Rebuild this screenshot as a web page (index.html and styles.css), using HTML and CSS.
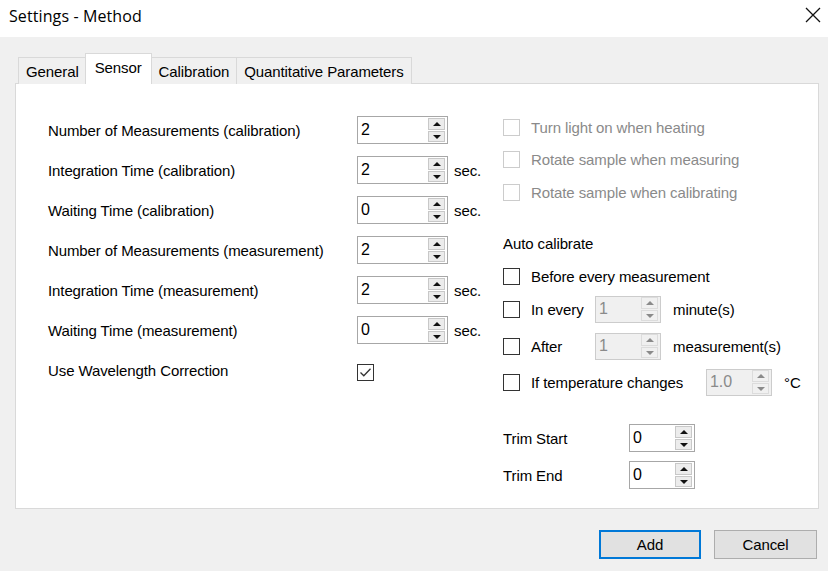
FILE: index.html
```html
<!DOCTYPE html>
<html>
<head>
	<meta charset="utf-8">
	<title>Settings - Method</title>
	<link rel="stylesheet" href="styles.css">
</head>
<body>
	<div class="titlebar">
		<span class="title">Settings - Method</span>
		<svg class="close" width="16" height="16" viewBox="0 0 16 16"><path d="M1 1L15 15M15 1L1 15" stroke="#111" stroke-width="1.3" fill="none"/></svg>
	</div>
	<div class="client">
		<div class="tabs">
			<div class="tab">General</div>
			<div class="tab active">Sensor</div>
			<div class="tab">Calibration</div>
			<div class="tab">Quantitative Parameters</div>
		</div>
		<div class="panel">
			<div class="left">
				<div class="row"><span class="label">Number of Measurements (calibration)</span>
					<div class="spin"><span class="val">2</span><span class="arrows"><i class="up"></i><i class="down"></i></span></div></div>
				<div class="row"><span class="label">Integration Time (calibration)</span>
					<div class="spin"><span class="val">2</span><span class="arrows"><i class="up"></i><i class="down"></i></span></div><span class="unit">sec.</span></div>
				<div class="row"><span class="label">Waiting Time (calibration)</span>
					<div class="spin"><span class="val">0</span><span class="arrows"><i class="up"></i><i class="down"></i></span></div><span class="unit">sec.</span></div>
				<div class="row"><span class="label">Number of Measurements (measurement)</span>
					<div class="spin"><span class="val">2</span><span class="arrows"><i class="up"></i><i class="down"></i></span></div></div>
				<div class="row"><span class="label">Integration Time (measurement)</span>
					<div class="spin"><span class="val">2</span><span class="arrows"><i class="up"></i><i class="down"></i></span></div><span class="unit">sec.</span></div>
				<div class="row"><span class="label">Waiting Time (measurement)</span>
					<div class="spin"><span class="val">0</span><span class="arrows"><i class="up"></i><i class="down"></i></span></div><span class="unit">sec.</span></div>
				<div class="row"><span class="label">Use Wavelength Correction</span>
					<span class="check checked"><svg width="15" height="15" viewBox="0 0 15 15"><path d="M2.5 7.5L5.8 10.8L12.5 3.8" stroke="#333" stroke-width="1.3" fill="none"/></svg></span></div>
			</div>
			<div class="right">
				<div class="opt r1 disabled"><span class="check"></span>Turn light on when heating</div>
				<div class="opt r2 disabled"><span class="check"></span>Rotate sample when measuring</div>
				<div class="opt r3 disabled"><span class="check"></span>Rotate sample when calibrating</div>
				<div class="heading">Auto calibrate</div>
				<div class="opt r5"><span class="check"></span>Before every measurement</div>
				<div class="opt r6"><span class="check"></span><span class="optlabel">In every</span>
					<div class="spin small off"><span class="val">1</span><span class="arrows"><i class="up"></i><i class="down"></i></span></div><span class="unit2">minute(s)</span></div>
				<div class="opt r7"><span class="check"></span><span class="optlabel">After</span>
					<div class="spin small off"><span class="val">1</span><span class="arrows"><i class="up"></i><i class="down"></i></span></div><span class="unit2">measurement(s)</span></div>
				<div class="opt r8"><span class="check"></span><span class="optlabel wide">If temperature changes</span>
					<div class="spin small off"><span class="val">1.0</span><span class="arrows"><i class="up"></i><i class="down"></i></span></div><span class="unit2">°C</span></div>
				<div class="trim first"><span class="trimlabel">Trim Start</span>
					<div class="spin small"><span class="val">0</span><span class="arrows"><i class="up"></i><i class="down"></i></span></div></div>
				<div class="trim"><span class="trimlabel">Trim End</span>
					<div class="spin small"><span class="val">0</span><span class="arrows"><i class="up"></i><i class="down"></i></span></div></div>
			</div>
		</div>
		<div class="buttons">
			<button class="btn default">Add</button>
			<button class="btn">Cancel</button>
		</div>
	</div>
</body>
</html>
```

FILE: styles.css
```css
body
{
	margin: 0;
	width: 828px;
	height: 571px;
	background-color: #f0f0f0;
	font-family: "Liberation Sans", Arial, sans-serif;
	font-size: 15px;
	letter-spacing: -0.1px;
	color: #000;
	overflow: hidden;
}
.titlebar
{
	height: 37px;
	background-color: #fff;
	display: flex;
	align-items: center;
	justify-content: space-between;
	padding: 0 7px 0 9px;
}
.title
{
	font-family: "Open Sans", sans-serif;
	font-size: 16px;
	letter-spacing: 0.1px;
	margin-top: -6px;
}
.close
{
	margin-top: -7px;
}
.client
{
	padding-top: 17px;
}
.tabs
{
	display: flex;
	align-items: flex-end;
	margin-left: 18px;
	height: 30px;
	position: relative;
	z-index: 1;
}
.tab
{
	height: 26px;
	line-height: 27px;
	padding: 0 7px;
	border: 1px solid #d9d9d9;
	border-bottom: none;
	margin-right: -1px;
	background-color: #f0f0f0;
}
.tab.active
{
	height: 30px;
	line-height: 28px;
	background-color: #fff;
	padding: 0 9px 0 9px;
	margin: 0 -1px 0 -1px;
	position: relative;
	z-index: 2;
}
.panel
{
	margin-left: 15px;
	margin-top: -1px;
	width: 802px;
	height: 424px;
	border: 1px solid #d9d9d9;
	background-color: #fff;
	display: flex;
}
.left
{
	width: 455px;
	padding: 32px 0 0 32px;
	display: flex;
	flex-direction: column;
	gap: 12px;
}
.row
{
	display: flex;
	align-items: center;
	height: 28px;
}
.label
{
	width: 309px;
}
.unit
{
	margin-left: 6px;
}
.spin
{
	width: 89px;
	height: 26px;
	border: 1px solid #a7a7a7;
	background-color: #fff;
	display: flex;
	justify-content: space-between;
	align-items: center;
}
.spin .val
{
	padding-left: 3px;
	font-size: 16px;
}
.arrows
{
	width: 17px;
	height: 24px;
	margin-right: 2px;
	display: flex;
	flex-direction: column;
	gap: 1px;
}
.arrows i
{
	flex: 1;
	background-color: #ececec;
	border: 1px solid #c8c8c8;
	position: relative;
}
.arrows i::after
{
	content: "";
	position: absolute;
	left: 4px;
	top: 3px;
	border-left: 4px solid transparent;
	border-right: 4px solid transparent;
}
.arrows .up::after
{
	border-bottom: 4px solid #111;
}
.arrows .down::after
{
	border-top: 4px solid #111;
}
.spin.small
{
	width: 64px;
}
.spin.off
{
	background-color: #f0f0f0;
	border-color: #cccccc;
	color: #8a8a8a;
	height: 25px;
}
.spin.off .arrows i
{
	background-color: #f0f0f0;
	border-color: #dcdcdc;
}
.spin.off .up::after
{
	border-bottom-color: #8a8a8a;
}
.spin.off .down::after
{
	border-top-color: #8a8a8a;
}
.check
{
	width: 15px;
	height: 15px;
	border: 1px solid #333;
	background-color: #fff;
	display: inline-block;
	margin-right: 11px;
	flex: none;
}
.row .check
{
	margin-top: 4px;
}
.right
{
	padding-top: 27px;
	display: flex;
	flex-direction: column;
}
.opt
{
	display: flex;
	align-items: center;
	height: 32px;
}
.opt.r2
{
	height: 33px;
}
.opt.disabled
{
	color: #8a8a8a;
}
.opt.disabled .check
{
	border-color: #cccccc;
}
.heading
{
	margin-top: 20px;
	height: 32px;
	line-height: 32px;
}
.opt.r6
{
	height: 34px;
}
.opt.r7
{
	height: 40px;
}
.optlabel
{
	width: 64px;
}
.optlabel.wide
{
	width: 175px;
}
.unit2
{
	margin-left: 12px;
}
.trim
{
	display: flex;
	align-items: center;
	height: 28px;
	margin-top: 9px;
}
.trim.first
{
	margin-top: 26px;
}
.trimlabel
{
	width: 126px;
}
.buttons
{
	display: flex;
	justify-content: flex-end;
	gap: 13px;
	padding-right: 11px;
	margin-top: 21px;
}
.btn
{
	width: 103px;
	height: 29px;
	background-color: #e1e1e1;
	border: 1px solid #adadad;
	font-family: "Liberation Sans", Arial, sans-serif;
	font-size: 15px;
	letter-spacing: -0.1px;
	color: #000;
	padding: 0;
}
.btn.default
{
	width: 102px;
	border: 2px solid #0078d7;
}
```
